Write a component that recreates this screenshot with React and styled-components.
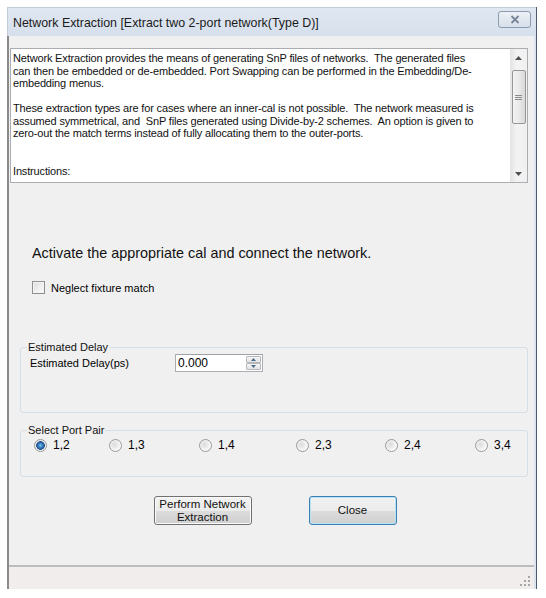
import React from 'react'
import styled, { createGlobalStyle } from 'styled-components'

const GlobalStyle = createGlobalStyle`
  html, body {
    margin: 0;
    padding: 0;
    background: #fff;
  }
  body {
    font-family: "Liberation Sans", Arial, sans-serif;
    font-size: 11px;
    color: #000;
  }
`

const Page = styled.div`
  padding: 7px 9px 9px 7px;
`

const Window = styled.div`
  width: 530px;
  height: 582px;
  display: flex;
  flex-direction: column;
  background: #dbe4ee;
  border-right: 1px solid #4d5d6e;
  box-sizing: border-box;
`

const TitleBar = styled.div`
  height: 28px;
  flex: none;
  display: flex;
  align-items: center;
  justify-content: space-between;
  padding: 0 5px 0 5px;
  background: linear-gradient(#dfe7f1, #d6e0ec);
  border-top: 1px solid #c2ccd8;
  border-left: 1px solid #c2ccd8;
`

const Title = styled.div`
  font-size: 12.4px;
  color: #1b1b1b;
  padding-top: 2px;
`

const CloseBox = styled.div`
  width: 33px;
  height: 17px;
  margin-top: -6px;
  box-sizing: border-box;
  border: 1px solid #8b9bb0;
  border-radius: 3px;
  background: linear-gradient(#edf1f6, #d7dfe9);
  display: flex;
  align-items: center;
  justify-content: center;
`

const Client = styled.div`
  flex: 1;
  display: flex;
  flex-direction: column;
  background: #f0f0f0;
  border-left: 2px solid #8a8a8a;
  margin-right: 2px;
`

const TextBox = styled.div`
  margin: 12px 6px 0 1px;
  height: 135px;
  box-sizing: border-box;
  border: 1px solid #abadb3;
  background: #fff;
  display: flex;
  overflow: hidden;
`

const TextBody = styled.div`
  flex: 1;
  padding: 3px 0 0 2px;
  white-space: pre;
  line-height: 12.5px;
  letter-spacing: -0.16px;
  color: #111;
  overflow: hidden;
`

const ScrollBar = styled.div`
  width: 17px;
  flex: none;
  display: flex;
  flex-direction: column;
  align-items: center;
  background: linear-gradient(90deg, #e3e3e3, #f3f3f3 40%, #f0f0f0);
`

const Arrow = styled.div`
  height: 17px;
  width: 17px;
  display: flex;
  align-items: center;
  justify-content: center;
`

const Thumb = styled.div`
  width: 14px;
  height: 54px;
  margin-top: 4px;
  box-sizing: border-box;
  border: 1px solid #979797;
  border-radius: 2px;
  background: linear-gradient(90deg, #f3f3f3, #e9e9e9 50%, #d9d9d9);
  display: flex;
  align-items: center;
  justify-content: center;
`

const Track = styled.div`
  flex: 1;
`

const Prompt = styled.div`
  margin: 62px 0 0 23px;
  font-size: 14.4px;
  line-height: 17px;
  color: #111;
`

const CheckRow = styled.label`
  margin: 19px 0 0 23px;
  display: flex;
  align-items: center;
  gap: 6px;
`

const CheckBoxMark = styled.span`
  width: 13px;
  height: 13px;
  box-sizing: border-box;
  border: 1px solid #8f8f8f;
  background: linear-gradient(135deg, #dcdcdc, #f4f4f4 70%, #fbfbfb);
  box-shadow: inset 0 0 0 1px #f4f4f4;
`

const Group = styled.fieldset`
  margin: ${p => p.$top}px 6px 0 11px;
  height: ${p => p.$height}px;
  box-sizing: border-box;
  border: 1px solid #d5dfe5;
  border-radius: 3px;
  padding: 0 10px 0 10px;
  min-width: 0;
`

const Legend = styled.legend`
  padding: 0 1px;
  margin-left: -4px;
  color: #111;
  font-size: 11px;
`

const FieldRow = styled.div`
  display: flex;
  align-items: center;
  margin-top: 1px;
`

const FieldLabel = styled.span`
  width: 145px;
  margin-left: -1px;
`

const Spin = styled.div`
  width: 88px;
  height: 18px;
  box-sizing: border-box;
  border: 1px solid #abadb3;
  border-top-color: #9fa2a9;
  background: #fff;
  display: flex;
  align-items: center;
`

const SpinValue = styled.span`
  flex: 1;
  padding-left: 2px;
  font-size: 12px;
`

const SpinButtons = styled.div`
  width: 15px;
  height: 14px;
  margin-right: 1px;
  display: flex;
  flex-direction: column;
`

const SpinHalf = styled.div`
  flex: 1;
  box-sizing: border-box;
  border: 1px solid #b5b8bd;
  border-radius: 1px;
  background: linear-gradient(#f6f6f6, #e2e2e2);
  display: flex;
  align-items: center;
  justify-content: center;
`

const RadioRow = styled.div`
  display: flex;
  align-items: center;
  margin-top: 2px;
  padding-left: 3px;
`

const RadioItem = styled.label`
  width: ${p => p.$w}px;
  flex: none;
  display: flex;
  align-items: center;
  gap: 6px;
  font-size: 12px;
`

const RadioDot = styled.span`
  width: 13px;
  height: 13px;
  box-sizing: border-box;
  border-radius: 50%;
  border: 1px solid #9a9a9a;
  background: ${p => p.$on
    ? 'radial-gradient(circle, #7cc5f0 0, #2f74b9 2.5px, #1f4f86 4px, #e9e9e9 4.6px, #f7f7f7 6px)'
    : 'radial-gradient(circle at 40% 40%, #dcdcdc 0, #e9e9e9 3px, #f8f8f8 6px)'};
`

const ButtonRow = styled.div`
  margin-top: 19px;
  display: flex;
  justify-content: center;
  gap: 57px;
  padding-left: 7px;
`

const Button = styled.div`
  width: ${p => p.$w}px;
  height: 29px;
  box-sizing: border-box;
  border: 1px solid ${p => p.$default ? '#3c7fb1' : '#707070'};
  border-radius: 3px;
  background: linear-gradient(#f2f2f2, #ebebeb 50%, #dddddd 51%, #cfcfcf);
  box-shadow: inset 0 0 0 1px ${p => p.$default ? '#b8e3f6' : '#fbfbfb'};
  display: flex;
  align-items: center;
  justify-content: center;
  text-align: center;
  font-size: 11.5px;
  line-height: 13px;
  color: #111;
`

const Spacer = styled.div`
  flex: 1;
`

const StatusBar = styled.div`
  height: 20px;
  flex: none;
  border-top: 2px solid #bcbcbc;
  background: #f0edec;
  display: flex;
  justify-content: flex-end;
  align-items: flex-end;
  padding: 0 3px 2px 0;
`

const ports = [
  { label: '1,2', w: 75 },
  { label: '1,3', w: 90 },
  { label: '1,4', w: 97 },
  { label: '2,3', w: 89 },
  { label: '2,4', w: 90 },
  { label: '3,4', w: 40 }
]

const lines = [
  'Network Extraction provides the means of generating SnP files of networks.  The generated files',
  'can then be embedded or de-embedded. Port Swapping can be performed in the Embedding/De-',
  'embedding menus.',
  ' ',
  'These extraction types are for cases where an inner-cal is not possible.  The network measured is',
  'assumed symmetrical, and  SnP files generated using Divide-by-2 schemes.  An option is given to',
  'zero-out the match terms instead of fully allocating them to the outer-ports.',
  ' ',
  ' ',
  'Instructions:'
]

function Grip () {
  const dots = [[8, 0], [4, 4], [8, 4], [0, 8], [4, 8], [8, 8]]
  return (
    <svg width='11' height='11' viewBox='0 0 11 11'>
      {dots.map(([x, y]) => (
        <rect key={x + '-' + y} x={x} y={y} width='2' height='2' fill='#a7a7a7' />
      ))}
    </svg>
  )
}

export default function App () {
  return (
    <>
      <GlobalStyle />
      <Page>
        <Window>
          <TitleBar>
            <Title>Network Extraction [Extract two 2-port network(Type D)]</Title>
            <CloseBox>
              <svg width='10' height='9' viewBox='0 0 10 9'>
                <path d='M1.5 1 L8.5 8 M8.5 1 L1.5 8' stroke='#76849a' strokeWidth='1.8' />
              </svg>
            </CloseBox>
          </TitleBar>

          <Client>
            <TextBox>
              <TextBody>
                {lines.map((l, i) => <div key={i}>{l}</div>)}
              </TextBody>
              <ScrollBar>
                <Arrow>
                  <svg width='7' height='4' viewBox='0 0 7 4'><path d='M0 4 L3.5 0 L7 4 Z' fill='#505050' /></svg>
                </Arrow>
                <Thumb>
                  <svg width='7' height='7' viewBox='0 0 7 7'>
                    <path d='M0 1.5 H7 M0 3.5 H7 M0 5.5 H7' stroke='#8a8a8a' strokeWidth='1' />
                  </svg>
                </Thumb>
                <Track />
                <Arrow>
                  <svg width='7' height='4' viewBox='0 0 7 4'><path d='M0 0 L3.5 4 L7 0 Z' fill='#505050' /></svg>
                </Arrow>
              </ScrollBar>
            </TextBox>

            <Prompt>Activate the appropriate cal and connect the network.</Prompt>

            <CheckRow>
              <CheckBoxMark />
              <span>Neglect fixture match</span>
            </CheckRow>

            <Group $top={47} $height={72}>
              <Legend>Estimated Delay</Legend>
              <FieldRow>
                <FieldLabel>Estimated Delay(ps)</FieldLabel>
                <Spin>
                  <SpinValue>0.000</SpinValue>
                  <SpinButtons>
                    <SpinHalf>
                      <svg width='5' height='3' viewBox='0 0 5 3'><path d='M0 3 L2.5 0 L5 3 Z' fill='#4a6a8a' /></svg>
                    </SpinHalf>
                    <SpinHalf>
                      <svg width='5' height='3' viewBox='0 0 5 3'><path d='M0 0 L2.5 3 L5 0 Z' fill='#4a6a8a' /></svg>
                    </SpinHalf>
                  </SpinButtons>
                </Spin>
              </FieldRow>
            </Group>

            <Group $top={11} $height={53}>
              <Legend>Select Port Pair</Legend>
              <RadioRow>
                {ports.map((p, i) => (
                  <RadioItem key={p.label} $w={p.w}>
                    <RadioDot $on={i === 0} />
                    <span>{p.label}</span>
                  </RadioItem>
                ))}
              </RadioRow>
            </Group>

            <ButtonRow>
              <Button $w={98}>Perform Network<br />Extraction</Button>
              <Button $w={88} $default>Close</Button>
            </ButtonRow>

            <Spacer />

            <StatusBar>
              <Grip />
            </StatusBar>
          </Client>
        </Window>
      </Page>
    </>
  )
}
